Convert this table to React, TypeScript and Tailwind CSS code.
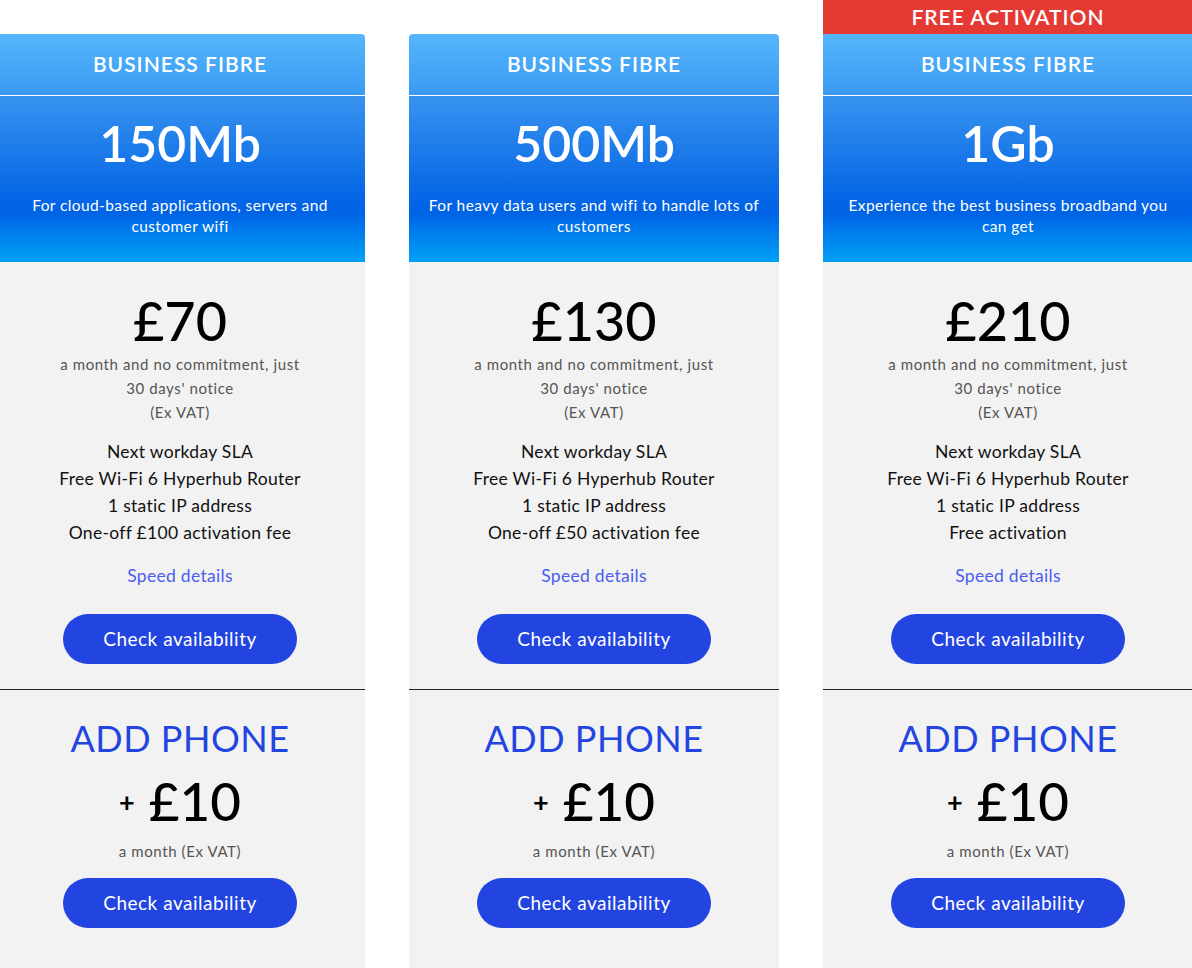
import React from "react";

type Plan = {
  speed: string;
  desc: string[];
  price: string;
  fee: string;
  banner?: boolean;
};

const plans: Plan[] = [
  { speed: "150Mb", desc: ["For cloud-based applications, servers and", "customer wifi"], price: "£70", fee: "One-off £100 activation fee" },
  { speed: "500Mb", desc: ["For heavy data users and wifi to handle lots of", "customers"], price: "£130", fee: "One-off £50 activation fee" },
  { speed: "1Gb", desc: ["Experience the best business broadband you", "can get"], price: "£210", fee: "Free activation", banner: true },
];

function Card({ p }: { p: Plan }) {
  return (
    <div className="w-[370px] shrink-0 flex flex-col">
      {p.banner ? (
        <div className="h-[34px] bg-[#e53a33] text-white text-[21px] font-semibold flex items-center justify-center tracking-[1px]">
          FREE ACTIVATION
        </div>
      ) : (
        <div className="h-[34px] bg-white" />
      )}
      <div className={`${p.banner ? "" : "rounded-t-[4px]"} overflow-hidden`}>
        <div className="h-[61px] bg-[linear-gradient(to_bottom,#55b6fc,#3a9af2)] flex items-center justify-center text-white text-[21px] font-semibold tracking-[1px] pb-[2px]">
          BUSINESS FIBRE
        </div>
        <div className="h-px bg-white" />
        <div className="h-[166px] bg-[linear-gradient(to_bottom,#3893ef_0%,#0a6ae6_55%,#0062e5_70%,#00a2f6_100%)] flex flex-col items-center text-white">
          <div className="mt-[19px] text-[50px] leading-[56px] font-semibold">{p.speed}</div>
          <div className="mt-[24px] text-[15.5px] leading-[21px] text-center tracking-[0.4px]">
            {p.desc.map((d) => (
              <div key={d}>{d}</div>
            ))}
          </div>
        </div>
      </div>
      <div className="bg-[#f2f2f2] flex flex-col items-center">
        <div className="mt-[28px] text-[54px] leading-[62px] text-black font-medium">{p.price}</div>
        <div className="text-[15px] leading-[24px] text-[#555] text-center tracking-[0.6px]">
          <div>a month and no commitment, just</div>
          <div>30 days' notice</div>
          <div>(Ex VAT)</div>
        </div>
        <div className="mt-[14px] text-[17.5px] leading-[27px] text-[#111] text-center tracking-[0.3px]">
          <div>Next workday SLA</div>
          <div>Free Wi-Fi 6 Hyperhub Router</div>
          <div>1 static IP address</div>
          <div>{p.fee}</div>
        </div>
        <div className="mt-[18px] text-[17.5px] leading-[24px] text-[#4b5df0] tracking-[0.3px]">Speed details</div>
        <button className="mt-[26px] w-[234px] h-[50px] rounded-full bg-[#2244e0] text-white text-[19px] tracking-[0.5px]">
          Check availability
        </button>
        <div className="mt-[25px] h-px w-full bg-[#222]" />
        <div className="mt-[28px] text-[36px] leading-[40px] text-[#2244e0] tracking-[0.5px]">ADD PHONE</div>
        <div className="mt-[12px] flex items-center gap-[14px]">
          <span className="text-[27px] leading-[24px] text-black font-bold mt-[2px]">+</span>
          <span className="text-[53px] leading-[62px] text-black font-medium">£10</span>
        </div>
        <div className="mt-[7px] text-[15px] leading-[24px] text-[#555] tracking-[0.6px]">a month (Ex VAT)</div>
        <button className="mt-[15px] w-[234px] h-[50px] rounded-full bg-[#2244e0] text-white text-[19px] tracking-[0.5px]">
          Check availability
        </button>
        <div className="h-[60px]" />
      </div>
    </div>
  );
}

export default function App() {
  return (
    <div className="w-[1192px] h-[968px] overflow-hidden bg-white font-['Lato',sans-serif]">
      <div className="ml-[-5px] flex gap-[44px]">
        {plans.map((p) => (
          <Card key={p.speed} p={p} />
        ))}
      </div>
    </div>
  );
}
